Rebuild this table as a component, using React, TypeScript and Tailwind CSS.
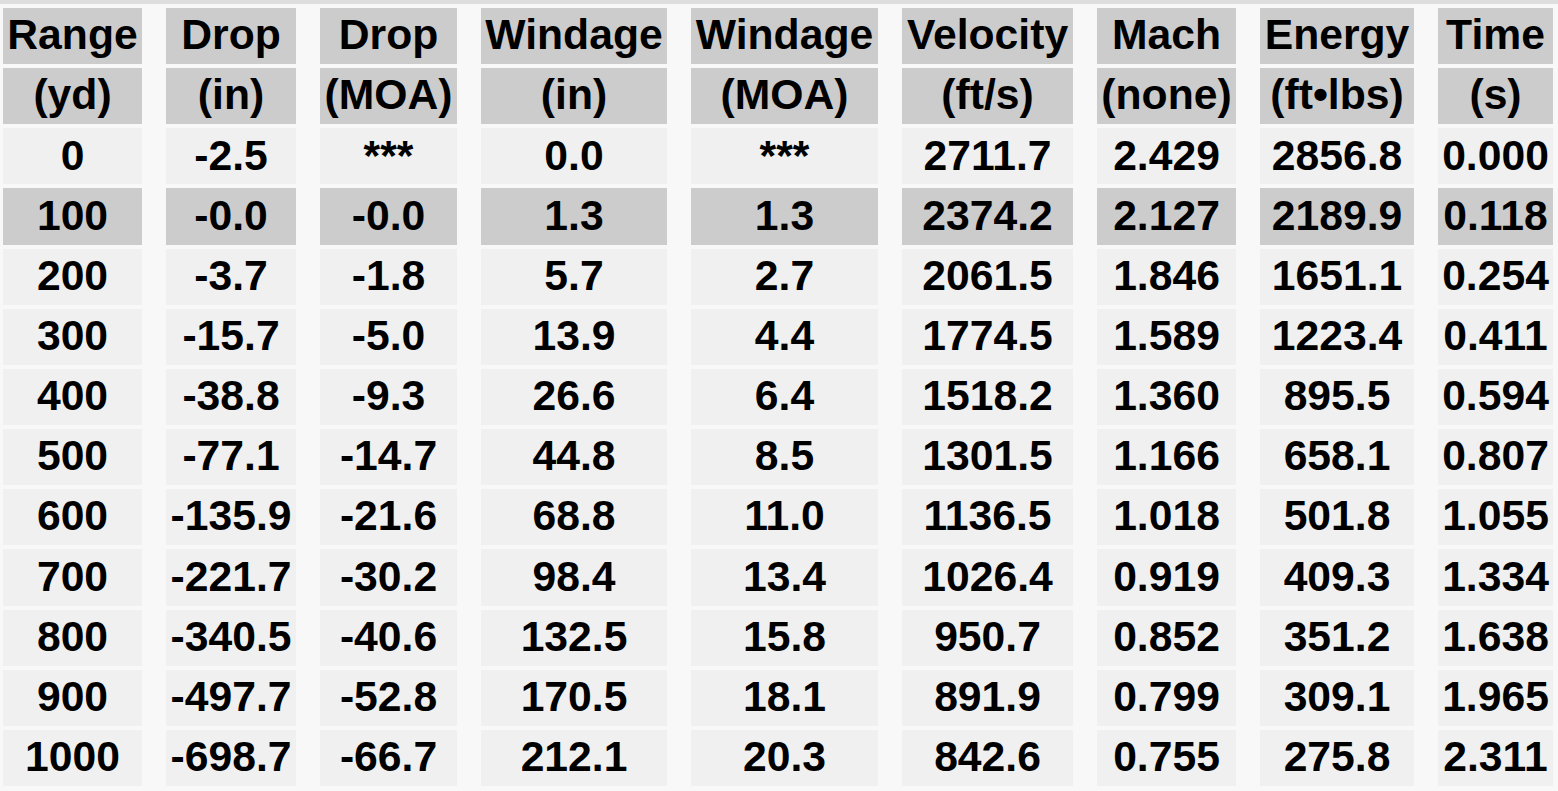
const head1 = ["Range", "Drop", "Drop", "Windage", "Windage", "Velocity", "Mach", "Energy", "Time"];
const head2 = ["(yd)", "(in)", "(MOA)", "(in)", "(MOA)", "(ft/s)", "(none)", "(ft\u2022lbs)", "(s)"];

const rows = [
  ["0", "-2.5", "***", "0.0", "***", "2711.7", "2.429", "2856.8", "0.000"],
  ["100", "-0.0", "-0.0", "1.3", "1.3", "2374.2", "2.127", "2189.9", "0.118"],
  ["200", "-3.7", "-1.8", "5.7", "2.7", "2061.5", "1.846", "1651.1", "0.254"],
  ["300", "-15.7", "-5.0", "13.9", "4.4", "1774.5", "1.589", "1223.4", "0.411"],
  ["400", "-38.8", "-9.3", "26.6", "6.4", "1518.2", "1.360", "895.5", "0.594"],
  ["500", "-77.1", "-14.7", "44.8", "8.5", "1301.5", "1.166", "658.1", "0.807"],
  ["600", "-135.9", "-21.6", "68.8", "11.0", "1136.5", "1.018", "501.8", "1.055"],
  ["700", "-221.7", "-30.2", "98.4", "13.4", "1026.4", "0.919", "409.3", "1.334"],
  ["800", "-340.5", "-40.6", "132.5", "15.8", "950.7", "0.852", "351.2", "1.638"],
  ["900", "-497.7", "-52.8", "170.5", "18.1", "891.9", "0.799", "309.1", "1.965"],
  ["1000", "-698.7", "-66.7", "212.1", "20.3", "842.6", "0.755", "275.8", "2.311"],
];

function Cell({ text, dark }: { text: string; dark?: boolean }) {
  return (
    <div
      className={
        "flex items-center justify-center whitespace-nowrap pb-[3px] " +
        (dark ? "bg-[#cccccc]" : "bg-[#f0f0f0]")
      }
    >
      {text}
    </div>
  );
}

export default function App() {
  return (
    <div className="w-[1558px] h-[791px] overflow-hidden bg-[#f8f8f8] font-['Liberation_Sans',Arial,sans-serif] font-bold text-black text-[42.67px] leading-none">
      <div className="h-1 bg-[#dedede]" />
      <div className="grid grid-cols-[139px_130px_137px_186px_187px_171px_139px_154px_115px] auto-rows-[56.17px] gap-x-6 gap-y-1 pl-[3px] pt-1">
        {head1.map((t, i) => (
          <Cell key={"a" + i} text={t} dark />
        ))}
        {head2.map((t, i) => (
          <Cell key={"b" + i} text={t} dark />
        ))}
        {rows.map((r, ri) =>
          r.map((t, ci) => <Cell key={ri + "-" + ci} text={t} dark={ri === 1} />)
        )}
      </div>
    </div>
  );
}
